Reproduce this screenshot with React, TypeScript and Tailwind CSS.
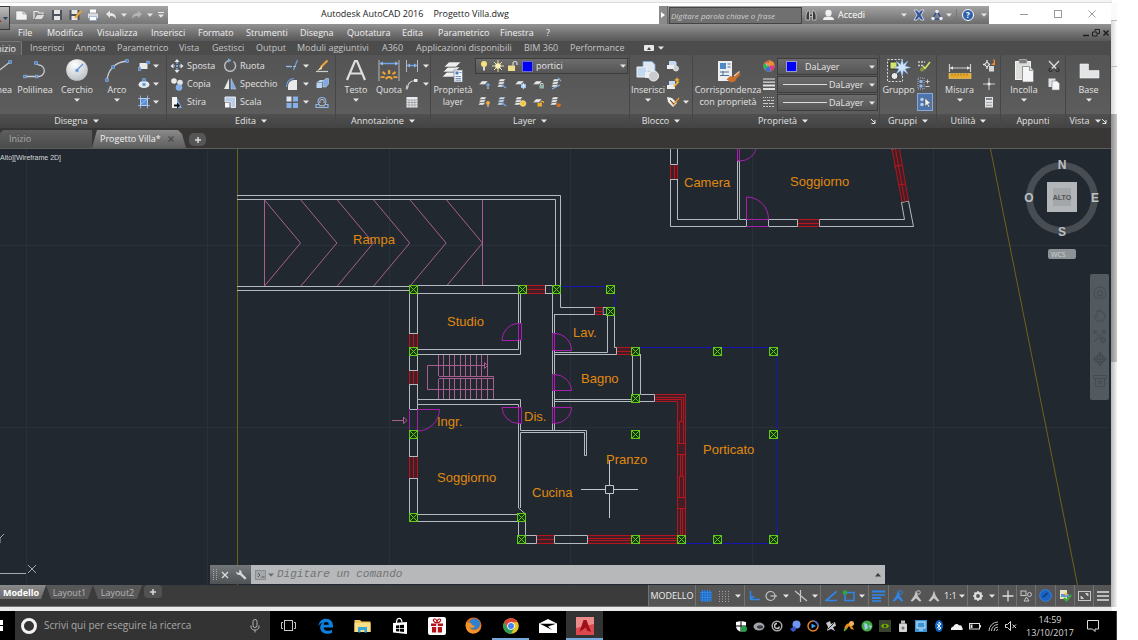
import React from "react";

type IconProps = { w?: number; h?: number; children: React.ReactNode; label?: string };

function Svg({ w = 16, h = 16, children }: IconProps) {
  return (
    <svg width={w} height={h} viewBox={`0 0 ${w} ${h}`} fill="none" className="shrink-0" aria-hidden="true">
      {children}
    </svg>
  );
}

function Caret({ color = "#e6e6e6" }: { color?: string }) {
  return (
    <Svg w={6} h={4}>
      <path d="M0 0.5h6L3 3.8z" fill={color} />
    </Svg>
  );
}

function IconButton({ label, className, children }: { label: string; className: string; children?: React.ReactNode }) {
  return (
    <button type="button" aria-label={label} className={`flex shrink-0 items-center justify-center ${className}`}>
      {children}
    </button>
  );
}

/* ---------- Ribbon glyphs ---------- */

const grip = (x: number, y: number) => (
  <rect key={`${x}-${y}`} x={x - 1.3} y={y - 1.3} width="2.6" height="2.6" fill="#4b7fc4" stroke="#8fb9ee" strokeWidth="0.7" />
);

const Sheets = ({ x = 0, y = 0, c = "#e8eaec" }: { x?: number; y?: number; c?: string }) => (
  <g transform={`translate(${x} ${y})`} stroke="#4a4a4a" strokeWidth="0.4" fill={c}>
    <path d="M2 7.6h5.5L5.4 10H0z" />
    <path d="M2.6 4.8H8L6 7.3H.6z" />
    <path d="M3.2 2H8.6L6.6 4.5H1.2z" />
  </g>
);

const Sheet = () => <path d="M4 4h6l-3 3.4H1z" fill="#e6e8ea" stroke="#555" strokeWidth="0.4" />;

const glyph = {
  line: (
    <Svg w={12} h={26}>
      <path d="M-8 18L10 4" stroke="#c9ccd0" strokeWidth="1.2" />
      {grip(10, 4)}
    </Svg>
  ),
  polyline: (
    <Svg w={26} h={26}>
      <path d="M3 18.500h13.500a5.800 5.800 0 0 0 0-11.600l-2-1.500" stroke="#c9ccd0" strokeWidth="1.3" />
      {grip(3, 18.5)}
      {grip(14.5, 18.5)}
      {grip(14, 5)}
    </Svg>
  ),
  circle: (
    <Svg w={26} h={26}>
      <defs>
        <radialGradient id="disc" cx="0.4" cy="0.25" r="0.9">
          <stop offset="0" stopColor="#ffffff" />
          <stop offset="1" stopColor="#aeb4bb" />
        </radialGradient>
      </defs>
      <circle cx="13" cy="12" r="10.800" fill="url(#disc)" />
      <path d="M13 12l6-6" stroke="#5b94dc" strokeWidth="1.200" />
      {grip(13, 12.5)}
    </Svg>
  ),
  arc: (
    <Svg w={26} h={26}>
      <path d="M3 22C4 12 11 4 23 3" stroke="#c9ccd0" strokeWidth="1.300" />
      {grip(3, 22)}
      {grip(9, 9)}
      {grip(23, 3)}
    </Svg>
  ),
  rect: (
    <Svg w={12} h={14}>
      <rect x="1.500" y="4" width="8" height="6" fill="#e8eaec" />
      {grip(1.5, 10)}
      {grip(10, 3.5)}
    </Svg>
  ),
  ellipse: (
    <Svg w={12} h={14}>
      <ellipse cx="6" cy="7.500" rx="5.500" ry="3.600" fill="#e8eaec" />
      {grip(6, 7.5)}
      {grip(6, 3)}
    </Svg>
  ),
  hatch: (
    <Svg w={12} h={14}>
      <rect x="2.500" y="3.500" width="7" height="7" fill="#5d92d6" stroke="#dfe6ef" />
      <path d="M2.500 0.500v13M9.500 0.500v13M0 3.500h12M0 10.500h12M3 9l6-5" stroke="#a7c7f1" strokeWidth="0.800" />
    </Svg>
  ),
  move: (
    <Svg>
      <path d="M8 1l2.500 3h-5zM8 15l2.500-3h-5zM1.500 8l3-2.500v5zM14.500 8l-3-2.500v5z" fill="#e8eaec" />
      <path d="M8 4v8M4 8h8" stroke="#8fb9ee" strokeWidth="1.200" strokeDasharray="2 1" />
    </Svg>
  ),
  copy: (
    <Svg>
      <circle cx="5" cy="5" r="2.800" fill="#e8eaec" />
      <circle cx="11" cy="6.500" r="2.800" fill="#dfe2e6" />
      <circle cx="10" cy="11.500" r="3.300" fill="#86b0e8" />
    </Svg>
  ),
  stretch: (
    <Svg>
      <path d="M3 3h5v11H3z" fill="#f1f3f5" />
      <path d="M8 4l5 10H8z" fill="#79a8e4" />
      <path d="M5 10.500h3V8.500l3 3-3 3v-2H5z" fill="#111" />
    </Svg>
  ),
  rotate: (
    <Svg>
      <path d="M11.500 3.500a5.500 5.500 0 1 1-5-.9" stroke="#b9bdc2" strokeWidth="1.500" />
      <path d="M6 .3l3.600 2L6 4.800z" fill="#7fa9e0" />
    </Svg>
  ),
  mirror: (
    <Svg>
      <path d="M7 2.500V13H2z" fill="#e8eaec" />
      <path d="M9 2.500V13h5z" fill="#7fa9e0" stroke="#b9d3f5" strokeWidth="0.500" />
    </Svg>
  ),
  scale: (
    <Svg>
      <path d="M3 3h10.500v10.500H9V8H3z" fill="#b8cdea" stroke="#e8eaec" />
      <rect x="3" y="9" width="4.500" height="4.500" fill="#f4f6f8" />
    </Svg>
  ),
  trim: (
    <Svg>
      <path d="M2 8.500h6" stroke="#8fb9ee" strokeWidth="1.400" />
      <path d="M13.500 2L9.500 12" stroke="#6ea3ea" strokeWidth="1.200" />
      <path d="M9 8.500h3" stroke="#b9bdc2" strokeWidth="1" />
    </Svg>
  ),
  fillet: (
    <Svg>
      <path d="M4 14V10a6 6 0 0 1 6-6h3v10z" fill="#e8eaec" />
      <path d="M2.500 11C2.500 6 5 3 10 2.500" stroke="#6ea3ea" strokeWidth="1.200" />
    </Svg>
  ),
  array: (
    <Svg>
      <rect x="2.500" y="2.500" width="5" height="5" fill="#dfe6ef" />
      <rect x="9" y="2.500" width="5" height="5" fill="#86b0e8" />
      <rect x="2.500" y="9" width="5" height="5" fill="#86b0e8" />
      <rect x="9" y="9" width="5" height="5" fill="#86b0e8" />
    </Svg>
  ),
  erase: (
    <Svg>
      <path d="M13.500 2.500L7 9" stroke="#e9a33c" strokeWidth="2.200" />
      <path d="M8 7.500L3 13l5-2z" fill="#f6d9a0" />
      <path d="M2 13.500h12" stroke="#c9ccd0" strokeWidth="1.200" />
    </Svg>
  ),
  explode: (
    <Svg>
      <path d="M3 6l3-2h4l-2 2zM2.500 6.500H8V12H2.500z" fill="#b9d3f5" />
      <path d="M9 5l3-2.500h2.500V8L12 11H9z" fill="#7fa9e0" stroke="#dbe7f7" strokeWidth="0.500" />
    </Svg>
  ),
  offset: (
    <Svg>
      <path d="M2 13.500h12v-3h-3c2-3 1-7-3-7s-5 4-3 7H2z" stroke="#8fb9ee" strokeWidth="1.100" />
      <path d="M5 11.800h6M6 9c-.8-2.500.5-3.500 2-3.500s2.800 1 2 3.500" stroke="#c9ccd0" />
    </Svg>
  ),
  text: (
    <svg width="24" height="26" viewBox="0 0 24 26" className="shrink-0" aria-hidden="true">
      <path d="M3 22L11 3h2l8 19M6 15.500h12" fill="none" stroke="#dcdee0" strokeWidth="2.200" />
    </svg>
  ),
  dimension: (
    <Svg w={24} h={26}>
      <path d="M2 2v21M22 2v21" stroke="#b3b7bb" />
      <path d="M3 5.500h18" stroke="#6ea3ea" strokeWidth="1.500" />
      <path d="M2.500 5.500l3.500-2v4zM21.500 5.500L18 3.500v4z" fill="#8fb9ee" />
      <g fill="#f0a534">
        <rect x="11" y="12" width="2.200" height="4" />
        <path d="M6 13l3 2.500-1 1.500-3-2zM18 13l-3 2.500 1 1.500 3-2zM3.500 18.500l4-.5v2h-4zM20.500 18.500l-4-.5v2h4zM8 21c1-4 7-4 8 0l-2 .5c-1-2-3-2-4 0z" />
      </g>
    </Svg>
  ),
  linear: (
    <Svg>
      <path d="M2.500 2v12M13.500 2v12" stroke="#b3b7bb" />
      <path d="M3 7.500h10" stroke="#6ea3ea" strokeWidth="1.400" />
      <path d="M3 7.500l3-2v4zM13 7.500l-3-2v4z" fill="#8fb9ee" />
    </Svg>
  ),
  leader: (
    <Svg>
      <path d="M3 13.500C4 8 5 5 11 4.500" stroke="#c9ccd0" strokeWidth="1.200" />
      <path d="M1.500 13.500l1-4.500 2.500 2z" fill="#c9ccd0" />
      <rect x="10" y="3" width="3.500" height="3" fill="#e8eaec" />
    </Svg>
  ),
  table: (
    <Svg>
      <rect x="2.500" y="3" width="11" height="10.500" fill="#e8eaec" />
      <path d="M2.500 6h11M2.500 8.500h11M2.500 11h11M5 6v7.500M8 6v7.500M10.800 6v7.500" stroke="#8d9196" strokeWidth="0.700" />
    </Svg>
  ),
  layerProps: (
    <Svg w={26} h={26}>
      <g fill="#eceef0" stroke="#555" strokeWidth="0.600">
        <path d="M7 14h12l-5 5H2z" />
        <path d="M8 9h12l-5 5H3z" />
        <path d="M9 4h12l-5 5H4z" />
      </g>
      <rect x="14" y="12" width="8.500" height="12" fill="#f4f6f8" stroke="#6b6f74" strokeWidth="0.600" />
      <rect x="15.500" y="13.500" width="3" height="3" fill="#4b7fc4" />
      <path d="M19.500 14.500h2M15.500 18.500h5.500M15.500 20.500h5.500M15.500 22.200h5.500" stroke="#5b86bd" strokeWidth="0.900" />
    </Svg>
  ),
  insertBlock: (
    <Svg w={26} h={26}>
      <path d="M8 3.500h9l3 3V14H8z" fill="#dfe6ef" stroke="#7fa9e0" strokeWidth="0.800" />
      <path d="M2 9h10v10H2z" fill="#c5d8f1" stroke="#f0f2f4" />
      <path d="M10 14h9v6h-9z" fill="#eceef0" />
      <circle cx="18.500" cy="18" r="5" fill="#c8ccd1" stroke="#f0f2f4" />
    </Svg>
  ),
  createBlock: (
    <Svg w={14} h={14}>
      <path d="M3 2h6l1.500 1.500V7H3z" fill="#c5d8f1" />
      <rect x="1" y="6" width="7" height="4" fill="#eceef0" />
      <circle cx="10" cy="9.500" r="2.600" fill="#c8ccd1" stroke="#f0f2f4" strokeWidth="0.600" />
    </Svg>
  ),
  editBlock: (
    <Svg w={14} h={14}>
      <rect x="1" y="8" width="8" height="4" fill="#eceef0" />
      <path d="M3 4h6v4H3z" fill="#c5d8f1" />
      <path d="M11 0l.9 2 2 .9-2 .9-.9 2-.9-2-2-.9 2-.9zM7 9l5-5 1.300 1.300-5 5z" fill="#f3b23c" />
    </Svg>
  ),
  attributes: (
    <Svg w={14} h={14}>
      <path d="M1 2l5 1 5 5-4 4-5-5z" fill="#eceef0" />
      <path d="M5 6l2.500 3.500L13 3" stroke="#e0962e" strokeWidth="1.600" />
      <path d="M4 5l4 4" stroke="#555" />
    </Svg>
  ),
  match: (
    <Svg w={26} h={26}>
      <rect x="3" y="3" width="14" height="20" fill="#eceef0" />
      <path d="M5 5h6v6H5z" fill="#4b89c9" />
      <path d="M12.500 6h3M12.500 9h3M5 14h9M5 17.500h9M8 13v5" stroke="#4f6f96" />
      <path d="M23.500 14.500L18 19l-3-1-3.500 3.500 5 3 4-1.500 1-2.500 4-4z" fill="#c9702c" />
      <path d="M19 18l5.500-4.500" stroke="#e7c9a9" strokeWidth="1.500" />
    </Svg>
  ),
  wheel: (
    <Svg w={12} h={12}>
      <circle cx="6" cy="6" r="5.500" fill="#e8e23c" />
      <path d="M6 6V.5A5.500 5.500 0 0 1 11.300 5z" fill="#f08c28" />
      <path d="M6 6L11.300 5A5.500 5.500 0 0 1 8 11.200z" fill="#d83a8c" />
      <path d="M6 6L8 11.200A5.500 5.500 0 0 1 1.500 9z" fill="#3d6bd8" />
      <path d="M6 6L1.500 9A5.500 5.500 0 0 1 1.500 3z" fill="#2fae58" />
      <path d="M6 6L1.500 3A5.500 5.500 0 0 1 6 .5z" fill="#d83f34" />
      <circle cx="4.500" cy="4" r="2" fill="#fff" opacity="0.350" />
    </Svg>
  ),
  weights: (
    <Svg w={12} h={12}>
      <path d="M0 1h12M0 4.200h12" stroke="#dfe1e3" strokeWidth="1.200" />
      <path d="M0 7.500h12M0 11h12" stroke="#dfe1e3" strokeWidth="2" />
    </Svg>
  ),
  lineTypes: (
    <Svg w={12} h={12}>
      <path d="M0 1.500h12" stroke="#c9ccd0" strokeDasharray="1 1" />
      <path d="M0 4.500h12" stroke="#c9ccd0" strokeDasharray="3 1" />
      <path d="M0 7.500h12" stroke="#c9ccd0" strokeDasharray="5 1" />
      <path d="M0 10.500h12" stroke="#c9ccd0" strokeDasharray="2 1" />
    </Svg>
  ),
  group: (
    <Svg w={26} h={26}>
      <rect x="1.500" y="1.500" width="15" height="22" stroke="#d5d8db" strokeDasharray="2 1.500" />
      <rect x="4" y="4" width="7" height="7" fill="#d7e36a" stroke="#222" strokeWidth="0.800" />
      <circle cx="8.500" cy="18" r="3.500" fill="#e8eaec" stroke="#222" strokeWidth="0.800" />
      <path d="M16 1l1.400 5.400L22 3l-3 5 5.500 1.500L19 11l3 5-4.600-3.400L16 18l-1.400-5.400L10 16l3-5-5-1.500L13 8l-3-5 4.600 3.400z" fill="#cfe5fb" stroke="#7fb2ee" strokeWidth="0.500" />
    </Svg>
  ),
  groupEdit: (
    <Svg w={14} h={14}>
      <path d="M1 3h7M1 6.500h6" stroke="#c9ccd0" strokeWidth="1.500" strokeDasharray="2 1" />
      <circle cx="5" cy="10.500" r="2" fill="#8c9a3a" />
      <path d="M6 7l2 2.500L13 3" stroke="#d7e36a" strokeWidth="1.500" />
    </Svg>
  ),
  groupAdd: (
    <Svg w={14} h={14}>
      <rect x="1" y="1" width="6" height="11" stroke="#9fb4d0" strokeDasharray="1 1" />
      <rect x="2.500" y="3" width="3" height="3" fill="#8fb9ee" />
      <circle cx="4" cy="9" r="1.700" fill="#8fb9ee" />
      <path d="M8.500 4.500h4M10.500 2.500v4M8.500 9.500h4" stroke="#c9ccd0" />
    </Svg>
  ),
  groupSelect: (
    <Svg w={14} h={12}>
      <circle cx="4" cy="3.500" r="1.800" fill="#b8cce8" />
      <circle cx="4" cy="8.500" r="1.800" fill="#b8cce8" />
      <path d="M7 2l6 5.500-2.700.3 1.500 3-1.300.7-1.500-3L7 10.500z" fill="#f3f3e8" stroke="#444" strokeWidth="0.500" />
    </Svg>
  ),
  measure: (
    <Svg w={26} h={26}>
      <path d="M2.500 6v8M23.500 6v8" stroke="#c9ccd0" strokeWidth="1.200" />
      <path d="M3 10h20" stroke="#c9ccd0" />
      <path d="M3 10l3-1.800v3.600zM23 10l-3-1.800v3.600z" fill="#e8eaec" />
      <rect x="2" y="15.500" width="22" height="5" fill="#e5a92e" stroke="#f5cf72" strokeWidth="0.600" />
      <path d="M5 15.500v2M8 15.500v2M11 15.500v2M14 15.500v2M17 15.500v2M20 15.500v2" stroke="#8a5d0c" strokeWidth="0.700" />
    </Svg>
  ),
  quickSelect: (
    <Svg w={14} h={14}>
      <path d="M1 5.500h7M5 1v9" stroke="#e8eaec" strokeWidth="1.300" />
      <circle cx="5" cy="5.500" r="2" stroke="#e8eaec" fill="#666" />
      <rect x="7" y="7" width="5" height="5.500" fill="#d5d8db" />
      <path d="M11 0l1 3-3 3h4V1z" fill="#ee8a2b" />
    </Svg>
  ),
  point: (
    <Svg w={14} h={14}>
      <path d="M7 1v12M1 7h12" stroke="#c9ccd0" strokeWidth="1.100" />
      <circle cx="7" cy="7" r="1.600" fill="#e8eaec" />
    </Svg>
  ),
  calc: (
    <Svg w={14} h={14}>
      <rect x="3" y="2" width="8" height="10.500" fill="#dfe1e3" />
      <path d="M4 4h6" stroke="#6b6f74" strokeWidth="1.600" />
      <path d="M4.500 7.500h5M4.500 10.300h5" stroke="#6b6f74" strokeWidth="1.200" strokeDasharray="1 1" />
    </Svg>
  ),
  paste: (
    <Svg w={26} h={26}>
      <rect x="4.500" y="3.500" width="15" height="18" fill="#dcded9" stroke="#f3f4f2" />
      <rect x="8" y="1.500" width="8" height="4" rx="1" fill="#7d7f7c" stroke="#d0d2cf" strokeWidth="0.600" />
      <path d="M11.500 8.500h7l4 4v11.500h-11z" fill="#f4f5f6" stroke="#6e7174" strokeWidth="0.700" />
      <path d="M18.500 8.500v4h4" stroke="#9a9da0" fill="#dfe1e3" />
    </Svg>
  ),
  cut: (
    <Svg w={14} h={14}>
      <path d="M2 2l8 8.500M12 2l-8 8.500" stroke="#dfe1e3" strokeWidth="1.200" />
      <circle cx="3.500" cy="11" r="1.600" stroke="#222" />
      <circle cx="10.500" cy="11" r="1.600" stroke="#222" />
    </Svg>
  ),
  copyClip: (
    <Svg w={14} h={14}>
      <rect x="1.500" y="1.500" width="7" height="8.500" fill="#dfe1e3" />
      <path d="M5 4h5l2.500 2.500V13H5z" fill="#f4f5f6" stroke="#77797c" strokeWidth="0.600" />
    </Svg>
  ),
  base: (
    <Svg w={26} h={26}>
      <path d="M4 6h8.500v6.500H23V20H4z" fill="#e2e4e6" stroke="#f5f6f7" strokeWidth="0.600" />
    </Svg>
  ),
};

/* ---------- Ribbon building blocks ---------- */

function BigTool({ icon, label, className, caret = true }: { icon: React.ReactNode; label: string; className: string; caret?: boolean }) {
  return (
    <button type="button" className={`flex shrink-0 flex-col items-center pt-[3px] leading-[12px] ${className}`}>
      {icon}
      <span className="whitespace-pre text-center">{label}</span>
      {caret && (
        <span className="pt-[2px]">
          <Caret />
        </span>
      )}
    </button>
  );
}

function SmallColumn({ items, className }: { items: { name: string; icon: React.ReactNode; caret?: boolean; on?: boolean }[]; className: string }) {
  return (
    <div className={`flex shrink-0 flex-col pt-[2px] ${className}`}>
      {items.map((it) => (
        <button
          key={it.name}
          type="button"
          aria-label={it.name}
          className={`flex h-[18px] items-center gap-[3px] ${it.on ? "border border-[#89a9d8] bg-[#4f73ab]" : ""}`}
        >
          {it.icon}
          {it.caret && <Caret />}
        </button>
      ))}
    </div>
  );
}

function LabelColumn({ items, className }: { items: { label: string; icon: React.ReactNode }[]; className: string }) {
  return (
    <div className={`flex shrink-0 flex-col pt-[2px] ${className}`}>
      {items.map((it) => (
        <button key={it.label} type="button" className="flex h-[18px] items-center gap-[2px]">
          {it.icon}
          <span>{it.label}</span>
        </button>
      ))}
    </div>
  );
}

function Panel({ title, className, children, caret = true, launcher = false }: { title: string; className: string; children: React.ReactNode; caret?: boolean; launcher?: boolean }) {
  return (
    <section aria-label={title} className={`flex shrink-0 flex-col border-r border-[#464646] ${className}`}>
      <div className="flex h-[59px] overflow-hidden bg-linear-to-b from-[#545454] to-[#5d5d5d]">{children}</div>
      <button type="button" className="flex h-[14px] items-center bg-linear-to-b from-[#505050] to-[#434343] px-[3px]">
        <span className="flex flex-1 items-center justify-center gap-[5px]">
          {title}
          {caret && <Caret />}
        </span>
        {launcher && (
          <Svg w={6} h={6}>
            <path d="M1 1l4 4M5 2v3.500H1.500" stroke="#e6e6e6" />
          </Svg>
        )}
      </button>
    </section>
  );
}

function PropertySelect({ label, swatch, line }: { label: string; swatch?: boolean; line?: boolean }) {
  return (
    <label className="flex h-[17px] items-center gap-[2px] border border-[#3d3d3d] bg-linear-to-b from-[#6c6c6c] to-[#555555] pr-[2px] pl-[4px]">
      {swatch && <span className="mr-[6px] ml-[4px] h-[11px] w-[11px] shrink-0 border border-[#9a9ad8] bg-[#0000f4]" />}
      {line && <span className="ml-px h-px w-[44px] shrink-0 bg-[#dcdcdc]" />}
      <select aria-label={label} className="min-w-0 flex-1 appearance-none bg-transparent text-[#e6e6e6] outline-none">
        <option>DaLayer</option>
      </select>
      <Caret />
    </label>
  );
}

/* ---------- Header ---------- */

function TitleBar() {
  return (
    <header className="relative flex h-[21px] items-end bg-white">
      <div className="absolute top-[3px] left-0 z-10 flex h-[24px] w-[10px] items-center border border-l-0 border-[#3a3a3a] bg-linear-to-b from-[#bdbdbd] to-[#707070]">
        <Svg w={9} h={10}>
          <path d="M0 7l1.500 2H0z" fill="#b01818" />
          <path d="M3 4h5L5.500 7z" fill="#33415e" />
        </Svg>
      </div>
      <div className="flex h-[18px] w-[168px] shrink-0 items-center bg-linear-to-b from-[#a3a3a3] to-[#767676] pl-[12px]">
        <IconButton label="Nuovo" className="w-[18px]">
          <Svg w={14} h={14}>
            <path d="M2 3h7l4 3v6H2z" fill="#f2f2f2" stroke="#777" strokeWidth="0.500" />
            <path d="M9 3v3h4" stroke="#888" strokeWidth="0.700" />
          </Svg>
        </IconButton>
        <IconButton label="Apri" className="w-[18px]">
          <Svg w={14} h={14}>
            <path d="M2 11V3.500h4l1 1.500h4v2" stroke="#e8e8e8" strokeWidth="1.200" />
            <path d="M2 11.500l3-5h8l-3 5z" fill="#ddd" stroke="#555" strokeWidth="0.500" />
          </Svg>
        </IconButton>
        <IconButton label="Salva" className="w-[18px]">
          <Svg w={14} h={14}>
            <rect x="2" y="2" width="10" height="10" fill="#4c535e" />
            <path d="M4 2h6v4H4zM4 8h6v4H4z" fill="#e6e6e6" />
          </Svg>
        </IconButton>
        <IconButton label="Salva con nome" className="w-[18px]">
          <Svg w={14} h={14}>
            <rect x="1.500" y="2" width="10" height="10" fill="#4c535e" />
            <path d="M3.500 2h6v4h-6zM3.500 8h6v4h-6z" fill="#e6e6e6" />
            <path d="M13 3L7 10" stroke="#efa22e" strokeWidth="2" />
          </Svg>
        </IconButton>
        <IconButton label="Stampa" className="w-[18px]">
          <Svg w={14} h={14}>
            <path d="M4 1.500h6V6H4z" fill="#fff" />
            <rect x="1.500" y="5" width="11" height="5.500" rx="1" fill="#d9dde2" stroke="#666" strokeWidth="0.500" />
            <path d="M3.500 8.500h7v4h-7z" fill="#fff" stroke="#6b8fc0" strokeWidth="0.500" />
          </Svg>
        </IconButton>
        <IconButton label="Annulla" className="w-[18px]">
          <Svg w={12} h={12}>
            <path d="M1 5l4-3.500V4c4 0 6 2 6 6-1.500-2.500-3-3-6-3v2z" fill="#e6e6e6" />
          </Svg>
        </IconButton>
        <span className="flex w-[8px] justify-center"><Caret /></span>
        <IconButton label="Ripeti" className="w-[18px]">
          <Svg w={12} h={12}>
            <path d="M11 5L7 1.500V4C3 4 1 6 1 10c1.500-2.500 3-3 6-3v2z" fill="#b4b4b4" />
          </Svg>
        </IconButton>
        <span className="flex w-[8px] justify-center"><Caret /></span>
        <span className="flex flex-1 flex-col items-center gap-px"><span className="h-px w-[6px] bg-[#eee]" /><Caret /></span>
      </div>
      <h1 className="flex flex-1 items-center gap-[10px] self-center pl-[153px] text-[9px] whitespace-nowrap text-[#1c1c1c]">
        <span>Autodesk AutoCAD 2016</span>
        <span>Progetto Villa.dwg</span>
      </h1>
      <div className="flex h-[18px] w-[330px] shrink-0 items-center bg-linear-to-b from-[#a3a3a3] to-[#6c6c6c]">
        <span className="flex h-full w-[9px] items-center justify-center border-r border-[#666] bg-[#8a8a8a]">
          <Svg w={4} h={6}><path d="M0 0l4 3-4 3z" fill="#fff" /></Svg>
        </span>
        <input
          type="text"
          aria-label="Cerca"
          placeholder="Digitare parola chiave o frase"
          className="ml-px h-[17px] w-[133px] border border-[#444] bg-[#707070] px-px text-[8px] italic text-white outline-none placeholder:text-[#cfcfcf]"
        />
        <IconButton label="Trova" className="w-[17px]">
          <Svg w={12} h={12}>
            <path d="M1 11V6l1.500-4h2V11zM7.500 11V2h2L11 6v5zM4.500 5h3v2.500h-3z" fill="#3c3c3c" stroke="#d6d6d6" strokeWidth="0.700" />
          </Svg>
        </IconButton>
        <button type="button" className="flex w-[48px] items-center gap-[3px] pl-[3px] text-[9px] text-white">
          <Svg w={13} h={12}>
            <circle cx="6.500" cy="4" r="3.200" fill="#f0f0f0" />
            <path d="M1 11c0-3 3-3.500 5.500-3.500S12 8 12 11z" fill="#f0f0f0" />
          </Svg>
          Accedi
        </button>
        <span className="flex flex-1 justify-end pr-[2px]"><Caret /></span>
        <IconButton label="Exchange" className="w-[20px]">
          <Svg w={12} h={12}>
            <path d="M1 1h3l2 2.500L8 1h3L8 6l3 5H8L6 8.500 4 11H1l3-5z" fill="#33549b" stroke="#e6ebf5" strokeWidth="0.800" />
          </Svg>
        </IconButton>
        <IconButton label="Connessioni" className="w-[16px]">
          <Svg w={12} h={12}>
            <path d="M6 2L1.500 10h9z" stroke="#2f4f94" strokeWidth="1.500" />
            <circle cx="6" cy="2.500" r="1.800" fill="#e6ebf5" /><circle cx="2" cy="9.500" r="1.800" fill="#e6ebf5" /><circle cx="10" cy="9.500" r="1.800" fill="#e6ebf5" />
          </Svg>
        </IconButton>
        <span className="flex w-[8px] justify-center"><Caret /></span>
        <span className="ml-[3px] h-[12px] w-px bg-[#777]" />
        <IconButton label="Guida" className="w-[22px]">
          <span className="flex h-[12px] w-[12px] items-center justify-center rounded-full border border-white bg-[#2f5fa8] text-[8px] leading-none font-bold text-white">?</span>
        </IconButton>
        <span className="flex w-[10px] justify-center"><Caret /></span>
      </div>
      <div className="flex w-[122px] shrink-0 self-center pl-[18px]">
        <IconButton label="Riduci a icona" className="w-[34px]">
          <Svg w={8} h={8}><path d="M0 4.500h8" stroke="#9a9a9a" /></Svg>
        </IconButton>
        <IconButton label="Ingrandisci" className="w-[34px]">
          <Svg w={8} h={8}><rect x="0.500" y="0.500" width="7" height="7" stroke="#9a9a9a" /></Svg>
        </IconButton>
        <IconButton label="Chiudi" className="w-[34px]">
          <Svg w={8} h={8}><path d="M0.500 0.500l7 7M7.500 0.500l-7 7" stroke="#9a9a9a" /></Svg>
        </IconButton>
      </div>
    </header>
  );
}

const menus = [
  ["File", "w-[29px]"],
  ["Modifica", "w-[50px]"],
  ["Visualizza", "w-[54px]"],
  ["Inserisci", "w-[47px]"],
  ["Formato", "w-[48px]"],
  ["Strumenti", "w-[54px]"],
  ["Disegna", "w-[47px]"],
  ["Quotatura", "w-[55px]"],
  ["Edita", "w-[36px]"],
  ["Parametrico", "w-[62px]"],
  ["Finestra", "w-[46px]"],
  ["?", "w-[20px]"],
];

const ribbonTabs = [
  ["Inserisci", "w-[45px]"],
  ["Annota", "w-[42px]"],
  ["Parametrico", "w-[62px]"],
  ["Vista", "w-[33px]"],
  ["Gestisci", "w-[44px]"],
  ["Output", "w-[41px]"],
  ["Moduli aggiuntivi", "w-[85px]"],
  ["A360", "w-[34px]"],
  ["Applicazioni disponibili", "w-[108px]"],
  ["BIM 360", "w-[46px]"],
  ["Performance", "w-[74px]"],
];

function MenuBar() {
  return (
    <nav aria-label="Menu" className="flex h-[17px] items-center bg-linear-to-b from-[#949494] via-[#747474] to-[#585858] pl-[18px] text-[#f0f0f0]">
      {menus.map(([name, width]) => (
        <button key={name} type="button" className={`shrink-0 text-left whitespace-nowrap ${width}`}>
          {name}
        </button>
      ))}
      <div className="ml-auto flex gap-[2px] pr-px">
        <IconButton label="Riduci disegno" className="w-[8px]">
          <Svg w={8} h={8}><path d="M1 6.500h6" stroke="#1e1e1e" strokeWidth="1.500" /></Svg>
        </IconButton>
        <IconButton label="Ripristina disegno" className="w-[8px]">
          <Svg w={8} h={8}><path d="M3 2.500v-2h4.500v4h-2M0.500 3h4.500v4H0.500z" stroke="#1e1e1e" /></Svg>
        </IconButton>
        <IconButton label="Chiudi disegno" className="w-[8px]">
          <Svg w={8} h={8}><path d="M1.500 1.500l5 5M6.500 1.500l-5 5" stroke="#1e1e1e" strokeWidth="1.600" /></Svg>
        </IconButton>
      </div>
    </nav>
  );
}

function RibbonTabs() {
  return (
    <nav aria-label="Schede" className="flex h-[14px] bg-[#4c4c4c] text-[#c6c6c6]">
      <button type="button" className="mr-[8px] flex w-[22px] shrink-0 justify-end overflow-hidden rounded-tr-[2px] border-t border-r border-[#777] bg-[#5a5a5a] pr-[5px] leading-[13px] text-[#f0f0f0]">
        Inizio
      </button>
      {ribbonTabs.map(([name, width]) => (
        <button key={name} type="button" className={`shrink-0 text-left leading-[14px] whitespace-nowrap ${width}`}>
          {name}
        </button>
      ))}
      <button type="button" aria-label="Riduci barra multifunzione" className="flex items-center gap-[4px]">
        <span className="flex h-[6px] w-[10px] items-center justify-center rounded-[1px] bg-[#e8e8e8]">
          <Svg w={4} h={3}><path d="M0 3l2-3 2 3z" fill="#444" /></Svg>
        </span>
        <Caret />
      </button>
    </nav>
  );
}

const layerRowOne = [
  { name: "Disattiva", art: <><Sheet /><circle cx="10" cy="8" r="1.800" fill="#79a8e4" /><path d="M10 10v2" stroke="#dfe1e3" /></> },
  { name: "Isola", art: <><Sheets x={1} y={0} /><path d="M6 8l4 3" stroke="#6ea3ea" strokeWidth="1.500" /></> },
  { name: "Congela", art: <><Sheet /><circle cx="9.500" cy="9" r="2.500" fill="#8fc2f5" /><path d="M9.500 6v6M7 7.500l5 3M12 7.500l-5 3" stroke="#e4f1ff" strokeWidth="0.600" /></> },
  { name: "Blocca", art: <><Sheet /><rect x="7.500" y="8" width="4.500" height="3.500" fill="#8db7a4" /><path d="M8.500 8V6.500h2.500V8" stroke="#c9ccd0" /></> },
  { name: "Rendi corrente", art: <><Sheets x={1} y={0} /><path d="M8 1l3 3M2 12l8-4" stroke="#7fb2e0" strokeWidth="1.200" /></> },
];

const layerRowTwo = [
  { name: "Attiva tutto", art: <><Sheets /><circle cx="10" cy="8" r="1.900" fill="#f0b23c" /><path d="M10 10v2" stroke="#dfe1e3" /></> },
  { name: "Annulla isolamento", art: <><Sheets x={1} y={0} c="#c5d8f1" /><path d="M6 8l4 3" stroke="#6ea3ea" strokeWidth="1.500" /></> },
  { name: "Scongela tutto", art: <><Sheets /><circle cx="9" cy="8.500" r="2.800" fill="#f3c93c" stroke="#fae59a" strokeWidth="0.800" /></> },
  { name: "Sblocca", art: <><Sheet /><rect x="5.500" y="8" width="4.500" height="3.500" fill="#eda92c" /><path d="M9 8V6.500h2.500V8" stroke="#eda92c" /></> },
  { name: "Corrispondenza layer", art: <><Sheets /><path d="M6 8l5 1-1 3H7z" fill="#c9702c" /></> },
];

function LayerIcons({ items }: { items: { name: string; art: React.ReactNode }[] }) {
  return (
    <div className="flex h-[18px] items-center">
      {items.map((it) => (
        <IconButton key={it.name} label={it.name} className="w-[18px]">
          <Svg w={13} h={13}>{it.art}</Svg>
        </IconButton>
      ))}
    </div>
  );
}

function Ribbon() {
  return (
    <div className="flex h-[73px] bg-[#5a5a5a] text-[#e2e2e2]">
      <section aria-label="Disegna" className="flex w-[167px] shrink-0 flex-col border-r border-[#464646]">
        <div className="flex h-[59px] overflow-hidden bg-linear-to-b from-[#545454] to-[#5d5d5d]">
          <button type="button" className="flex w-[12px] shrink-0 flex-col items-end pt-[3px] leading-[12px]">
            {glyph.line}
            <span>Linea</span>
          </button>
          <BigTool icon={glyph.polyline} label="Polilinea" className="w-[46px]" caret={false} />
          <BigTool icon={glyph.circle} label="Cerchio" className="w-[38px]" />
          <BigTool icon={glyph.arc} label="Arco" className="w-[42px]" />
          <SmallColumn
            className="w-[26px]"
            items={[
              { name: "Rettangolo", icon: glyph.rect, caret: true },
              { name: "Ellisse", icon: glyph.ellipse, caret: true },
              { name: "Tratteggio", icon: glyph.hatch, caret: true },
            ]}
          />
        </div>
        <button type="button" className="flex h-[14px] items-center justify-center gap-[5px] bg-linear-to-b from-[#505050] to-[#434343] pr-[13px]">
          Disegna
          <Caret />
        </button>
      </section>

      <Panel title="Edita" className="w-[169px]">
        <LabelColumn
          className="w-[55px] pl-[2px]"
          items={[
            { label: "Sposta", icon: glyph.move },
            { label: "Copia", icon: glyph.copy },
            { label: "Stira", icon: glyph.stretch },
          ]}
        />
        <LabelColumn
          className="w-[62px]"
          items={[
            { label: "Ruota", icon: glyph.rotate },
            { label: "Specchio", icon: glyph.mirror },
            { label: "Scala", icon: glyph.scale },
          ]}
        />
        <SmallColumn
          className="w-[30px]"
          items={[
            { name: "Taglia", icon: glyph.trim, caret: true },
            { name: "Raccorda", icon: glyph.fillet, caret: true },
            { name: "Serie", icon: glyph.array, caret: true },
          ]}
        />
        <SmallColumn
          className="w-[16px]"
          items={[
            { name: "Cancella", icon: glyph.erase },
            { name: "Esplodi", icon: glyph.explode },
            { name: "Offset", icon: glyph.offset },
          ]}
        />
      </Panel>

      <Panel title="Annotazione" className="w-[95px]">
        <BigTool icon={glyph.text} label="Testo" className="w-[40px]" />
        <BigTool icon={glyph.dimension} label="Quota" className="w-[26px]" caret={false} />
        <SmallColumn
          className="w-[28px] pl-[2px]"
          items={[
            { name: "Lineare", icon: glyph.linear, caret: true },
            { name: "Direttrice", icon: glyph.leader, caret: true },
            { name: "Tabella", icon: glyph.table },
          ]}
        />
      </Panel>

      <Panel title="Layer" className="w-[199px]">
        <BigTool icon={glyph.layerProps} label={"Proprietà\nlayer"} className="w-[44px]" caret={false} />
        <div className="flex flex-1 flex-col pt-[3px] pr-px">
          <label className="flex h-[16px] items-center gap-[3px] border border-[#3d3d3d] bg-linear-to-b from-[#6c6c6c] to-[#555555] pr-px pl-[3px]">
            <Svg w={10} h={12}>
              <circle cx="5" cy="4" r="3" fill="#f6e27c" />
              <path d="M4 7h2v3.500H4z" fill="#d9dbdd" />
            </Svg>
            <Svg w={12} h={12}>
              <path d="M6 0v12M0 6h12M2 2l8 8M10 2l-8 8" stroke="#f3e9a4" strokeWidth="0.900" />
              <circle cx="6" cy="6" r="2.800" fill="#f8f1b8" />
            </Svg>
            <Svg w={12} h={12}>
              <rect x="1" y="5.500" width="7" height="5.500" fill="#f1dd8a" />
              <path d="M6 5.500V3.500a2 2 0 0 1 4 0V5" stroke="#d9dbdd" strokeWidth="1.200" />
            </Svg>
            <span className="h-[11px] w-[11px] shrink-0 border border-[#6c6cd0] bg-[#0000f4]" />
            <select aria-label="Layer corrente" className="min-w-0 flex-1 appearance-none bg-transparent text-[#e6e6e6] outline-none">
              <option>portici</option>
            </select>
            <Caret />
          </label>
          <LayerIcons items={layerRowOne} />
          <LayerIcons items={layerRowTwo} />
        </div>
      </Panel>

      <Panel title="Blocco" className="w-[63px]">
        <BigTool icon={glyph.insertBlock} label="Inserisci" className="w-[36px]" />
        <SmallColumn
          className="w-[26px]"
          items={[
            { name: "Crea blocco", icon: glyph.createBlock },
            { name: "Modifica blocco", icon: glyph.editBlock },
            { name: "Attributi", icon: glyph.attributes, caret: true },
          ]}
        />
      </Panel>

      <Panel title="Proprietà" className="w-[187px]" launcher>
        <BigTool icon={glyph.match} label={"Corrispondenza\ncon proprietà"} className="w-[70px]" caret={false} />
        <SmallColumn
          className="w-[14px]"
          items={[
            { name: "Colore", icon: glyph.wheel },
            { name: "Spessore di linea", icon: glyph.weights },
            { name: "Tipo di linea", icon: glyph.lineTypes },
          ]}
        />
        <div className="flex flex-1 flex-col gap-px pt-[3px] pr-px">
          <PropertySelect label="Colore oggetto" swatch />
          <PropertySelect label="Spessore di linea" line />
          <PropertySelect label="Tipo di linea" line />
        </div>
      </Panel>

      <Panel title="Gruppi" className="w-[57px]">
        <BigTool icon={glyph.group} label="Gruppo" className="w-[37px]" caret={false} />
        <SmallColumn
          className="w-[16px]"
          items={[
            { name: "Modifica gruppo", icon: glyph.groupEdit },
            { name: "Aggiungi al gruppo", icon: glyph.groupAdd },
            { name: "Selezione gruppi", icon: glyph.groupSelect, on: true },
          ]}
        />
      </Panel>

      <Panel title="Utilità" className="w-[64px]">
        <BigTool icon={glyph.measure} label="Misura" className="w-[45px]" />
        <SmallColumn
          className="w-[16px]"
          items={[
            { name: "Selezione rapida", icon: glyph.quickSelect },
            { name: "Punto", icon: glyph.point },
            { name: "Calcolatrice", icon: glyph.calc },
          ]}
        />
      </Panel>

      <Panel title="Appunti" className="w-[65px]" caret={false}>
        <BigTool icon={glyph.paste} label="Incolla" className="w-[46px]" />
        <SmallColumn
          className="w-[16px]"
          items={[
            { name: "Taglia negli Appunti", icon: glyph.cut },
            { name: "Copia negli Appunti", icon: glyph.copyClip },
          ]}
        />
      </Panel>

      <Panel title="Vista" className="w-[45px]" launcher>
        <BigTool icon={glyph.base} label="Base" className="w-[45px]" />
      </Panel>
    </div>
  );
}

function FileTabs() {
  return (
    <div className="flex h-[21px] items-end border-b border-[#5c5c5c] bg-[#383736]">
      <button type="button" className="h-[18px] w-[92px] shrink-0 rounded-tl-[5px] bg-linear-to-b from-[#5e5e5e] to-[#4c4c4c] pl-[9px] text-left text-[#aaaaaa]">
        Inizio
      </button>
      <div className="flex h-[18px] w-[94px] shrink-0 items-center justify-between bg-linear-to-b from-[#8a8a8a] to-[#5f5f5f] pr-[11px] pl-[8px] text-[#f2f2f2] [clip-path:polygon(5px_0,calc(100%-8px)_0,calc(100%-4px)_4px,100%_100%,0_100%)]">
        <button type="button" className="whitespace-nowrap">Progetto Villa*</button>
        <IconButton label="Chiudi Progetto Villa" className="w-[8px]">
          <Svg w={6} h={6}><path d="M0.500 0.500l5 5M5.500 0.500l-5 5" stroke="#4a4a4a" strokeWidth="1.300" /></Svg>
        </IconButton>
      </div>
      <IconButton label="Nuova scheda" className="mb-[2px] ml-[3px] h-[13px] w-[17px] rounded-[5px] bg-[#565656]">
        <Svg w={8} h={8}><path d="M1 4h6M4 1v6" stroke="#dedede" strokeWidth="1.500" /></Svg>
      </IconButton>
    </div>
  );
}

/* ---------- Drawing ---------- */

const columns = [
  [413, 289], [522, 289], [556, 289], [610, 289], [413, 351], [610, 311], [635, 351], [635, 398],
  [413, 434], [413, 517], [521, 517], [521, 539], [635, 434], [635, 539], [681, 539], [717, 539],
  [773, 539], [717, 351], [773, 351], [773, 434],
];

const rooms: [string, number, number][] = [
  ["Rampa", 353, 244], ["Studio", 447, 326], ["Lav.", 573, 337], ["Bagno", 581, 383], ["Dis.", 524, 421],
  ["Ingr.", 437, 426], ["Soggiorno", 437, 482], ["Cucina", 532, 497], ["Pranzo", 606, 464],
  ["Porticato", 703, 454], ["Camera", 684, 187], ["Soggiorno", 790, 186],
];

const wallPath = [
  "M237 195.500H560.500V307.500H594.500M237 199.500H555.500V285.500M237 286.500H409M237 290.500H409",
  "M409 285.500H527M545 285.500H556M417 293.500H518.500M545 293.500H552.500M545.500 285.500V293.500M526.500 285.500V293.500",
  "M409.500 285V333M417.500 293V333M409 333.500H418M409 347.500H418M409.500 347V370M417.500 347V370M409 370.500H418M409 384.500H418M409.500 384V409M417.500 384V409M409 409.500H418",
  "M417 349.500H518.500M417 354.500H520.500M518.500 293V323M520.500 293V323M518.500 340V349.500M520.500 340V354.500",
  "M417 399.500H520.500V407M417 404.500H518.500V407",
  "M409.500 438V456M417.500 438V456M409 456.500H418M409 478.500H418M409.500 478V514M417.500 478V514",
  "M417 514.500H518M409 521.500H518M518.500 423V508L525.500 514M520.500 423V430.500M520.500 432.500V508",
  "M520.500 430.500H586.500V455.500H584.500V432.500H520.500M518.500 521V536M525.500 513V536",
  "M525 535.500H536.500V543.500H525M554.500 535.500H587.500V543.500H554.500z",
  "M552.500 293V333M554.500 314V333M552.500 350V374M554.500 350V374M552.500 391V407M554.500 391V407M552.500 423V430M554.500 423V430",
  "M554 314.500H594.500V307.500M603 307.500V314.500M603 307.500H607M603 314.500H607.500V352.500H554M554 354.500H616.500V347.500H614.500V314",
  "M632.500 354V394M640.500 354V394.500M554 399.500H632M554 401.500H640M640.500 394.500H654.500V401.500H640M631.500 347.500V354.500",
  "M670.500 149V164.500H677.500V149M670.500 179.500H677.500M670.500 179V226.500H746.500V219.500H739.500V161M677.500 179V219.500H737.500V161H739.500",
  "M768.500 219.500H797.500V226.500H768.500zM819.500 219.500V226.500H913.500L908.500 201L901.500 202.500L904.500 219.500H819.500M891 149h3",
];

const glassPath = [
  "M527 285H545V294H527zM409 334H418V347H409zM409 371H418V384H409zM409 457H418V478H409z",
  "M595 307H603V315H595zM617 347H631V355H617zM537 535H554V544H537zM588 535H678V544H588z",
  "M655 394H686V536H677V402H655zM670 165H678V179H670zM798 219H819V227H798zM892 149H899.500L908.500 201L902 202z",
];

const windowPath = [
  "M527 285.500H545M527 289.500H545M527 293.500H545",
  "M409.500 334V347M413.500 334V347M417.500 334V347M409.500 371V384M413.500 371V384M417.500 371V384M409.500 457V478M413.500 457V478M417.500 457V478",
  "M595 307.500H603M595 311.500H603M595 314.500H603M617 347.500H631M617 351.500H631M617 354.500H631",
  "M537 535.500H554M537 539.500H554M537 543.500H554M588 535.500H678M588 538.500H678M588 540.500H678M588 543.500H678",
  "M655 394.500H685.500V536M655 397.500H683.500V421M655 399.500H681.500V421M655 401.500H677.500V536",
  "M679.500 421.500H683.500V443.500H679.500zM677.500 443.500H685.500M677.500 454.500H685.500M680.500 454V476M682.500 454V476",
  "M679.500 476.500H683.500V497.500H679.500zM677.500 497.500H685.500M677.500 508.500H685.500M680.500 508V536M682.500 508V536",
  "M670.500 165V179M674.500 165V179M677.500 165V179M798 219.500H819M798 223.500H819M798 226.500H819",
];

const doorPath = [
  "M518.500 323.500h3v16.500h-3zM518 340.500H502A17 17 0 0 1 518 323.500",
  "M518.500 407.500h3v16h-3zM518 407.500H502A17 17 0 0 0 518 423.500",
  "M552.500 333.500h2v17h-2zM554.500 350.500H571.500A17 17 0 0 0 554.500 333.500",
  "M552.500 374.500h2v16h-2zM554.500 390.500H571.500A17 17 0 0 0 554.500 374.500",
  "M552.500 407.500h2v16h-2zM554.500 407.500H571.500A17 17 0 0 1 554.500 423.500",
  "M409.500 409V431M417.500 431V409.500H439.500A22 22 0 0 1 417.500 431",
  "M737.500 149V161H739.500V149M739.500 161A17 15 0 0 0 756 149",
  "M746.500 219.500V197A22 22 0 0 1 768.500 219.500zM746.500 226.500H768.500",
];

const chevrons = [0, 1, 2, 3, 4, 5].map((k) => 264.5 + k * 36.4);
const steps = [0, 1, 2, 3, 4, 5, 6, 7, 8, 9].map((k) => Math.round(438 + k * 5.4) + 0.5);

function FloorPlan() {
  return (
    <svg className="absolute inset-0 h-full w-full" role="img" aria-label="Progetto Villa">
      <g transform="translate(0 -149)" fill="none" strokeWidth="1">
        <g stroke="#29323a">
          {[26, 207, 389, 570, 752, 933].map((x) => (
            <path key={x} d={`M${x}.500 149V600`} />
          ))}
          <path d="M0 245.500H1108M0 427.500H1108" />
        </g>
        <path d="M237.500 149V600M990.500 149L1080.500 600" stroke="#70611a" />
        <path d="M560 286.500H614.500V307M640 347.500H777.500V543.500H685" stroke="#1717b4" />
        <g stroke="#a85f90">
          <path d="M264.500 200V286M482.500 200V286" />
          {chevrons.map((x) => (
            <path key={x} d={`M${x} 200L${x + 36} 243L${x} 286`} />
          ))}
          {steps.map((x) => (
            <path key={x} d={`M${x} 355V376M${x} 379V399`} />
          ))}
          <path d="M439 376.500H493.500V399M439 378.500H493M484 365.500H427.500V389.500H493M484.500 362.500V368.500L487.500 365.500z" />
          <path d="M392 420.500H403M403.500 417L407 420.500L403.500 423.500z" />
        </g>
        <path d={wallPath.join("")} stroke="#b4babf" />
        <path d={glassPath.join("")} fill="#5c1820" fillOpacity="0.6" />
        <path d={windowPath.join("")} stroke="#b3161e" />
        <path d="M892 149L902 202M895.500 149L905 202M899.500 149L908.500 201M894 166.500L903 165M898 185L906 184" stroke="#b3161e" />
        <path d={doorPath.join("")} stroke="#a81fb0" />
        {columns.map(([x, y]) => (
          <g key={`${x}-${y}`} stroke="#62c81c">
            <rect x={x - 3.5} y={y - 3.5} width="8" height="8" fill="#18360f" />
            <path d={`M${x - 3} ${y - 3}l7 7M${x + 4} ${y - 3}l-7 7`} />
          </g>
        ))}
        <g className="[font-family:'Liberation_Sans',sans-serif] text-[13px]" fill="#e0890f">
          {rooms.map(([name, x, y]) => (
            <text key={`${name}-${x}`} x={x} y={y}>{name}</text>
          ))}
        </g>
        <path d="M581 489.500H605M614 489.500H638M609.500 461V485M609.500 494V518M605.500 485.500H613.500V493.500H605.500z" stroke="#c3c8cc" />
        <path d="M0 573.500H26M28 565L36 573M36 565L28 573M-4 534L0 538L4 534M0 538V543" stroke="#a3a9ae" />
      </g>
    </svg>
  );
}

function ViewCube() {
  return (
    <div className="absolute top-[9px] right-[10px] flex flex-col items-center">
      <svg width="78" height="84" viewBox="0 0 78 84" className="[font-family:'Liberation_Sans',sans-serif]" aria-label="ViewCube">
        <circle cx="39" cy="40" r="32.500" fill="none" stroke="#474d52" strokeWidth="7" />
        <rect x="24" y="24" width="30" height="30" fill="#b3b6b8" />
        <rect x="30" y="30" width="18" height="18" fill="#a4a7a9" />
        <g className="text-[12px] font-bold" fill="#bcc0c3" textAnchor="middle">
          <text x="39" y="11">N</text>
          <text x="39" y="78">S</text>
          <text x="6" y="44">O</text>
          <text x="72" y="44">E</text>
        </g>
        <text x="39" y="42" textAnchor="middle" className="text-[7px] font-bold" fill="#505356">ALTO</text>
      </svg>
      <button type="button" className="mt-[7px] flex h-[10px] w-[28px] items-center rounded-[2px] bg-[#8d9297] px-[3px] text-[7px] leading-none text-[#cfd2d4]">
        WCS
      </button>
    </div>
  );
}

function NavBar() {
  return (
    <div className="absolute top-[125px] right-[2px] flex h-[126px] w-[19px] flex-col items-center justify-around rounded-[2px] bg-[#535a5f] py-[8px]">
      <IconButton label="Ruota di navigazione" className="h-[16px] w-[16px]">
        <Svg><circle cx="8" cy="8" r="6" stroke="#454c51" /><circle cx="8" cy="8" r="2.500" stroke="#454c51" /><path d="M5 11h6" stroke="#454c51" /></Svg>
      </IconButton>
      <IconButton label="Panoramica" className="h-[16px] w-[16px]">
        <Svg><path d="M5 14C3 11 2 9 3 8l2 2V4c1-1 2 0 2 1V3c1-1 2 0 2 1v1c1-1 2 0 2 1v1c1-1 2 0 2 1 0 3-1 4-2 6z" stroke="#454c51" /></Svg>
      </IconButton>
      <IconButton label="Zoom" className="h-[16px] w-[16px]">
        <Svg><path d="M2 2l11 11M13 2L2 13M2 5V2h3M10 2h3v3" stroke="#42494e" /><circle cx="11" cy="11" r="2.500" stroke="#42494e" /></Svg>
      </IconButton>
      <IconButton label="Orbita" className="h-[16px] w-[16px]">
        <Svg><path d="M8 1v14M1 8h14" stroke="#42494e" /><ellipse cx="8" cy="8" rx="6" ry="3" stroke="#42494e" /><ellipse cx="8" cy="8" rx="3" ry="6" stroke="#42494e" /></Svg>
      </IconButton>
      <IconButton label="ShowMotion" className="h-[16px] w-[16px]">
        <Svg><path d="M1.500 2.500h13v3h-13zM3.500 5.500h9v8h-9zM7 7.500v4l3-2z" stroke="#454c51" /></Svg>
      </IconButton>
    </div>
  );
}

function CommandLine() {
  return (
    <div className="absolute right-[226px] bottom-[1px] left-[210px] flex h-[19px] bg-[#b6b8b9]">
      <div className="flex w-[41px] shrink-0 items-center bg-linear-to-b from-[#74777a] to-[#505356] pl-[2px]">
        <Svg w={6} h={16}><path d="M1.500 2v12M4.500 2v12" stroke="#a5a8aa" strokeDasharray="1 1" /></Svg>
        <IconButton label="Chiudi riga di comando" className="w-[14px]">
          <Svg w={8} h={8}><path d="M1 1l6 6M7 1l-6 6" stroke="#dcdcdc" strokeWidth="1.300" /></Svg>
        </IconButton>
        <IconButton label="Personalizza" className="w-[18px]">
          <Svg w={12} h={12}>
            <path d="M1 2.500l2 1.500 1.500-1L4 1c2 0 3 1.500 2.700 3.200L11.500 9 10 10.800 5 6C3 6.500 1 5 1 2.500z" fill="#d5d7d8" />
          </Svg>
        </IconButton>
      </div>
      <label className="flex flex-1 items-center gap-[2px] px-[4px]">
        <span className="flex h-[10px] w-[11px] items-center justify-center border border-[#8b8e91] bg-[#a5a8ab]">
          <Svg w={8} h={6}><path d="M1 1l2 2-2 2M4.500 5h3" stroke="#55595c" /></Svg>
        </span>
        <Caret color="#6a6d70" />
        <input
          type="text"
          aria-label="Riga di comando"
          placeholder="Digitare un comando"
          className="ml-px min-w-0 flex-1 bg-transparent text-[11px] italic outline-none [font-family:'Liberation_Mono',monospace] placeholder:text-[#717477]"
        />
        <Svg w={6} h={4}><path d="M0 3.500h6L3 0z" fill="#3a3c3e" /></Svg>
      </label>
    </div>
  );
}

/* ---------- Status bar ---------- */

const blue = "#2f86e8";
const pale = "#c4c6c8";

function StatusGroup({ children, className }: { children: React.ReactNode; className: string }) {
  return <div className={`flex h-full shrink-0 items-center border-r border-[#727272] ${className}`}>{children}</div>;
}

function StatusBar() {
  const person = (c: string, mark: boolean) => (
    <Svg w={14} h={14}>
      <path d="M7 1.500l1.700 5.200L12.500 12l-2 .5L7 9.300l-3.500 3.200-2-.5 3.800-5.300z" fill={c} />
      {mark && <circle cx="9.500" cy="3.500" r="1.800" fill="none" stroke={c} />}
    </Svg>
  );
  return (
    <footer className="flex h-[22px] justify-between border-b border-[#777] bg-[#3b3b3b]">
      <nav aria-label="Layout" className="flex items-start">
        <button type="button" className="h-[14px] w-[46px] bg-linear-to-b from-[#8a8a8a] to-[#6a6a6a] pl-[3px] text-left leading-[13px] font-bold text-white [clip-path:polygon(0_0,100%_0,calc(100%-5px)_100%,0_100%)]">
          Modello
        </button>
        <button type="button" className="h-[14px] w-[47px] bg-[#575757] leading-[13px] text-[#b5b5b5] [clip-path:polygon(0_0,100%_0,calc(100%-5px)_100%,5px_100%)]">
          Layout1
        </button>
        <button type="button" className="h-[14px] w-[49px] bg-[#575757] leading-[13px] text-[#b5b5b5] [clip-path:polygon(0_0,100%_0,calc(100%-5px)_100%,5px_100%)]">
          Layout2
        </button>
        <IconButton label="Nuovo layout" className="ml-[2px] h-[13px] w-[18px] rounded-[4px] bg-[#515151]">
          <Svg w={8} h={8}><path d="M1 4h6M4 1v6" stroke="#d6d6d6" strokeWidth="1.500" /></Svg>
        </IconButton>
      </nav>
      <div className="flex h-[21px] border-l border-[#727272] bg-[#555555] text-[#eeeeee]">
        <StatusGroup className="w-[47px] justify-center">
          <button type="button">MODELLO</button>
        </StatusGroup>
        <StatusGroup className="w-[49px]">
          <IconButton label="Griglia" className="w-[19px]">
            <Svg w={12} h={12}><rect x="1" y="1" width="10" height="10" fill="#2163b0" /><path d="M2.500 0v12M5 0v12M7.500 0v12M10 0v12M0 2.500h12M0 5h12M0 7.500h12M0 10h12" stroke={blue} /></Svg>
          </IconButton>
          <IconButton label="Snap" className="w-[17px]">
            <Svg w={12} h={12}><path d="M1.500 1v11M4.500 1v11M7.500 1v11M10.500 1v11" stroke="#a5a7a9" strokeDasharray="1 1.500" /></Svg>
          </IconButton>
          <span className="flex w-[12px] justify-center"><Caret /></span>
        </StatusGroup>
        <StatusGroup className="w-[76px]">
          <IconButton label="Orto" className="w-[17px]">
            <Svg w={12} h={12}><path d="M2.500 1v8.500H12M4 9.500V7h2.500" stroke={blue} strokeWidth="1.500" /></Svg>
          </IconButton>
          <IconButton label="Puntamento polare" className="w-[18px]">
            <Svg w={12} h={12}><circle cx="5.500" cy="6" r="4.500" stroke={pale} strokeWidth="1.200" /><path d="M5.500 6H12" stroke={pale} strokeWidth="1.200" /></Svg>
          </IconButton>
          <span className="flex w-[12px] justify-center"><Caret /></span>
          <IconButton label="Disegno isometrico" className="w-[18px]">
            <Svg w={14} h={14}><path d="M1 2l12 10M6.500 1v12" stroke={pale} strokeWidth="1.200" /></Svg>
          </IconButton>
          <span className="flex w-[10px] justify-center"><Caret /></span>
        </StatusGroup>
        <StatusGroup className="w-[48px]">
          <IconButton label="Puntamento snap" className="w-[20px]">
            <Svg w={12} h={12}><path d="M11.500 1.500L1 10.500h11" stroke={blue} strokeWidth="1.700" /></Svg>
          </IconButton>
          <IconButton label="Snap ad oggetto" className="w-[15px]">
            <Svg w={14} h={12}><rect x="3" y="2.500" width="9" height="8" stroke={blue} strokeWidth="1.500" /><rect x="1" y="0.500" width="4" height="4" fill="#2aa83a" /></Svg>
          </IconButton>
          <span className="flex w-[12px] justify-center"><Caret /></span>
        </StatusGroup>
        <StatusGroup className="w-[20px] justify-center">
          <IconButton label="Spessore linea" className="w-[16px]">
            <Svg w={13} h={12}><path d="M0 1.500h13M0 8h9" stroke={blue} strokeWidth="2" /><path d="M0 5h13M0 11h9" stroke={blue} strokeWidth="1.500" /></Svg>
          </IconButton>
        </StatusGroup>
        <StatusGroup className="w-[79px]">
          <IconButton label="Visibilità annotazione" className="w-[18px]">{person(blue, true)}</IconButton>
          <IconButton label="Scala automatica" className="w-[18px]">{person(pale, true)}</IconButton>
          <IconButton label="Scala annotazione" className="w-[18px]">{person(pale, false)}</IconButton>
          <button type="button" className="flex items-center gap-[2px] pl-px">1:1<Caret /></button>
        </StatusGroup>
        <StatusGroup className="w-[31px] justify-center gap-[5px]">
          <IconButton label="Area di lavoro" className="w-[12px]">
            <Svg w={10} h={10}><circle cx="5" cy="5" r="3" stroke="#dedede" strokeWidth="2.200" /><path d="M5 0v2M5 8v2M0 5h2M8 5h2M1.500 1.500l1.300 1.300M7.200 7.200l1.300 1.300M8.500 1.500L7.200 2.800M2.800 7.200L1.500 8.500" stroke="#dedede" strokeWidth="1.500" /></Svg>
          </IconButton>
          <Caret />
        </StatusGroup>
        <StatusGroup className="w-[18px] justify-center">
          <IconButton label="Monitor annotazioni" className="w-[14px]">
            <Svg w={12} h={12}><path d="M0.500 6h11M6 0.500v11" stroke="#dedede" strokeWidth="1.300" /></Svg>
          </IconButton>
        </StatusGroup>
        <StatusGroup className="w-[19px] justify-center">
          <IconButton label="Isola oggetti" className="w-[14px]">
            <Svg w={12} h={12}><rect x="1" y="1" width="5" height="4.500" stroke={pale} /><circle cx="9.500" cy="4.500" r="2" stroke={pale} /><path d="M4 11l2.500-4L9 11z" stroke={pale} /></Svg>
          </IconButton>
        </StatusGroup>
        <StatusGroup className="w-[20px] justify-center">
          <IconButton label="Prestazioni grafiche" className="w-[14px]">
            <Svg w={13} h={13}><circle cx="6.500" cy="6.500" r="5.800" fill="#1c62c0" stroke="#2f86e8" /><path d="M4 8l4.500-4" stroke="#0f3977" strokeWidth="1.500" /></Svg>
          </IconButton>
        </StatusGroup>
        <StatusGroup className="w-[19px] justify-center">
          <IconButton label="Notifica" className="w-[14px]">
            <Svg w={13} h={13}><rect x="1" y="1" width="7" height="9" fill="#e8e4c4" /><path d="M2 5h8v3H2z" fill="#5b94dc" /><path d="M5 9l2.500 2.500L12 6" stroke="#3fae3a" strokeWidth="2" /><circle cx="7" cy="5" r="1.500" fill="#efc23c" /></Svg>
          </IconButton>
        </StatusGroup>
        <StatusGroup className="w-[19px] justify-center">
          <IconButton label="Schermo intero" className="w-[14px]">
            <Svg w={13} h={12}><rect x="0.500" y="1.500" width="12" height="9" stroke={pale} /><path d="M3 8.500V6l2.500 2.500zM10 3.500V6L7.500 3.500z" fill={pale} stroke={pale} /></Svg>
          </IconButton>
        </StatusGroup>
        <IconButton label="Personalizzazione" className="w-[17px]">
          <Svg w={12} h={12}><path d="M0 2h12M0 6h12M0 10h12" stroke="#dedede" strokeWidth="1.300" /></Svg>
        </IconButton>
      </div>
    </footer>
  );
}

/* ---------- Taskbar ---------- */

const apps: { name: string; on?: boolean; bar?: boolean; icon: React.ReactNode }[] = [
  {
    name: "Visualizzazione attività",
    icon: <Svg w={16} h={14}><rect x="3.500" y="1.500" width="8" height="10" stroke="#c8c8c8" /><path d="M2 3.500H.5v6H2M13 3.500h1.500v6H13" stroke="#c8c8c8" /></Svg>,
  },
  {
    name: "Edge",
    icon: <Svg w={16} h={16}><path d="M.5 8C1 3.500 4 .8 8 .8c4.500 0 7 3 7 7.200v1.500H5.500c.3 2.500 2 3.300 4.500 3.300 1.600 0 3-.4 4-1v3c-1.200.7-2.800 1-4.600 1C5 15.800 2.200 13.200 2.200 9.500c0-2.500 1.500-4.300 3.300-5C3.500 4.800 1.500 6 .5 8zM5.600 6.800h5.200c0-1.800-1-2.800-2.600-2.800S5.800 5 5.600 6.800z" fill="#0c80dc" fillRule="evenodd" /></Svg>,
  },
  {
    name: "Esplora file",
    icon: <Svg w={17} h={14}><path d="M.5 1H6l1.500 1.500h9V13H.5z" fill="#f0c95c" /><path d="M.5 4h16v9H.5z" fill="#fadf86" /><path d="M4 8h9v5.500h-2.500V11h-4v2.500H4z" fill="#35a6dc" /></Svg>,
  },
  {
    name: "Store",
    icon: <Svg w={16} h={18}><path d="M1 6l14-1v12L1 15.500z" fill="#fff" /><path d="M4.500 6C4.500 0 9.500 0 10 5.500" stroke="#fff" strokeWidth="1.200" /><path d="M4 8.500l3.300-.3v2.900H4zM8 8.100l4-.3v3.300H8zM4 11.800h3.300v2.700L4 14.200zM8 11.800h4V15l-4-.4z" fill="#000" /></Svg>,
  },
  {
    name: "Regali",
    icon: <Svg w={18} h={18}><rect width="18" height="18" rx="2" fill="#fff" /><path d="M3 6.500h5.200v2.500H3zM9.800 6.500H15v2.500H9.800zM4 10h4.200v5.500H4zM9.800 10H14v5.500H9.800z" fill="#b5121b" /><path d="M9 6C5 5.500 4.500 2 6.500 2S9 5 9 6c0-1 .5-4 2.500-4S13 5.500 9 6z" stroke="#b5121b" strokeWidth="1.200" /></Svg>,
  },
  {
    name: "Firefox",
    icon: <Svg w={17} h={17}><circle cx="8.500" cy="8.500" r="8" fill="#e66a12" /><circle cx="9.500" cy="7" r="5.500" fill="#2d7fd0" /><path d="M1 5c1 .5 2 1 4.500.5L7 8l3 1c-1 2-4 2.500-6 .5 1 4 6 5 9.500 2 1.500-1.500 2-4 2-4 1 4-2.500 9-7.500 9-5.500 0-8-5.500-7-11.500z" fill="#f0952a" /></Svg>,
  },
  {
    name: "Chrome",
    bar: true,
    icon: <Svg w={16} h={16}><circle cx="8" cy="8" r="7.800" fill="#e8c52c" /><path d="M8 .2A7.800 7.800 0 0 0 1.250 4.100L4.600 10 8 8V4.200h6.750A7.800 7.800 0 0 0 8 .2z" fill="#dc4437" /><path d="M1.250 4.100A7.800 7.800 0 0 0 8 15.800l3.300-5.900L8 8l-3.400 2z" fill="#2f9d58" /><circle cx="8" cy="8" r="3.800" fill="#fff" /><circle cx="8" cy="8" r="3" fill="#4585f0" /></Svg>,
  },
  {
    name: "Posta",
    icon: <Svg w={18} h={14}><path d="M0 4.500L9 0l9 4.500V14H0z" fill="#fff" /><path d="M1 4.800h16L9 7.500l4 3.500z" fill="#000" /></Svg>,
  },
  {
    name: "AutoCAD 2016",
    on: true,
    bar: true,
    icon: <Svg w={18} h={18}><rect width="18" height="18" fill="#dc4a50" /><path d="M0 0h18v7L0 11z" fill="#f6b8b4" opacity="0.600" /><path d="M3.500 15L7.500 3h3L15 15l-4-1.500-1-3-3 2z" fill="#a01018" /></Svg>,
  },
];

const tray: { name: string; icon: React.ReactNode }[] = [
  { name: "Sicurezza", icon: <><path d="M1 2l5-1 5 1v4c0 3-2 5-5 6-3-1-5-3-5-6z" fill="#fff" /><path d="M6 1v11M1 6h10" stroke="#000" /><circle cx="9" cy="9" r="3" fill="#22a04a" /></> },
  { name: "Creative", icon: <><ellipse cx="6" cy="6.500" rx="5.500" ry="4" fill="#9fa4a8" /><ellipse cx="7" cy="7" rx="3" ry="1.700" fill="#3a3d40" /></> },
  { name: "Swirl", icon: <><circle cx="6" cy="6" r="4.800" stroke="#aaa" strokeWidth="1.500" /><path d="M6 3.500a2.500 2.500 0 1 0 2.500 3" stroke="#ccc" strokeWidth="1.300" /></> },
  { name: "Sincronizzazione", icon: <><circle cx="7.500" cy="4.500" r="4" fill="#6f96f0" /><path d="M1 9l5-3 1 4-3 2z" fill="#3558c8" /></> },
  { name: "Lettore", icon: <><circle cx="6" cy="6" r="5" stroke="#e8822c" strokeWidth="1.500" /><path d="M6 1a5 5 0 0 1 5 5" stroke="#3d6bd8" strokeWidth="1.500" /><path d="M4.500 3.500L9 6 4.500 8.500z" fill="#3f9fe8" /></> },
  { name: "Strumenti", icon: <><path d="M1 3l4-2 1 3 4-2 1 4-3 1 2 4-4-2-4 2 1-4z" fill="#c8cacc" /><path d="M3 9l6-6" stroke="#333" /></> },
  { name: "Avast", icon: <><path d="M1 10C2 4 5 2 8 4l3 6-3-1-2-3-3 4z" fill="#ef8a1d" /><circle cx="8.500" cy="3.500" r="2.500" fill="#f5b25a" /><path d="M1 11l3-3" stroke="#3fae3a" strokeWidth="1.500" /></> },
  { name: "Mappa", icon: <><circle cx="6" cy="6" r="5.500" fill="#48a64a" /><path d="M3 3l3 1 1 4-3 2zM8 5l3 1-2 3z" fill="#9bd0f0" /></> },
  { name: "Nvidia", icon: <><rect width="12" height="12" fill="#39432f" /><path d="M2 6c2-3 6-3 8 0-2 3-6 3-8 0z" fill="#76b900" /><circle cx="6" cy="6" r="1.500" fill="#2c3324" /></> },
  { name: "USB", icon: <><rect x="4" y="0.500" width="4" height="3" fill="#bbb" /><rect x="2" y="3.500" width="8" height="8.500" rx="1" fill="#d5d5d5" /><circle cx="6" cy="8" r="1.500" fill="#777" /></> },
  { name: "Grafica Intel", icon: <><rect width="12" height="12" fill="#3a93d4" /><rect x="2" y="2" width="8" height="6" stroke="#d4ecfb" /><path d="M4 10h4" stroke="#d4ecfb" /></> },
  { name: "Bluetooth", icon: <><ellipse cx="6" cy="6" rx="4" ry="6" fill="#0b62c4" /><path d="M3.800 3.800l4.200 4.200L6 10V2l2 2-4.200 4.200" stroke="#fff" strokeWidth="0.900" /></> },
  { name: "OneDrive", icon: <path d="M0 10V8.500C.5 7 2 6.500 2.500 6.500 3 4 6.500 3 8 5.500c2-.5 3 .5 3 2 1 .3 1 2.500 0 2.500z" fill="#f2f2f2" /> },
  { name: "Batteria", icon: <><rect x="0.500" y="3.500" width="10" height="5.500" stroke="#ddd" /><path d="M11.500 5v2.500" stroke="#ddd" /><rect x="1.500" y="4.500" width="2" height="3.500" fill="#ddd" /></> },
  { name: "Rete", icon: <path d="M2 11A9 9 0 0 1 11 2M4.500 11A6.500 6.500 0 0 1 11 4.500M7 11a4 4 0 0 1 4-4M9.500 11a1.500 1.500 0 0 1 1.500-1.500" stroke="#bcbcbc" /> },
  { name: "Volume", icon: <path d="M0.500 4.500h2l3-3v9l-3-3h-2zM7.500 4.500l3.500 3.500M11 4.500L7.500 8" stroke="#ddd" /> },
];

function Taskbar() {
  return (
    <div className="mr-[21px] flex h-[29px] items-stretch border-r border-[#3a3a3a] bg-black text-[#d8d8d8]">
      <IconButton label="Start" className="w-[15px]">
        <span className="mr-auto flex flex-col gap-px">
          <span className="h-[5px] w-[3px] bg-white" />
          <span className="h-[5px] w-[3px] bg-white" />
        </span>
      </IconButton>
      <label className="flex w-[255px] shrink-0 items-center bg-[#333333] pr-[9px] pl-[6px]">
        <span className="h-[16px] w-[16px] shrink-0 rounded-full border-3 border-[#f2f2f2]" />
        <input
          type="search"
          aria-label="Cerca in Windows"
          placeholder="Scrivi qui per eseguire la ricerca"
          className="ml-[7px] min-w-0 flex-1 bg-transparent text-[10px] outline-none placeholder:text-[#a9a9a9]"
        />
        <Svg w={12} h={14}>
          <rect x="4" y="0.500" width="4" height="8" rx="2" stroke="#b4b4b4" />
          <path d="M2 6.500v1.500c0 4 8 4 8 0V6.500M6 11v2.500" stroke="#b4b4b4" />
        </Svg>
      </label>
      {apps.map((app) => (
        <button
          key={app.name}
          type="button"
          aria-label={app.name}
          className={`flex w-[37px] shrink-0 flex-col items-center border-b-2 pt-[2px] ${app.on ? "bg-[#333333]" : ""} ${app.bar ? "border-[#76a9dc]" : "border-transparent"}`}
        >
          <span className="flex flex-1 items-center">{app.icon}</span>
        </button>
      ))}
      <div className="ml-auto flex items-center pr-px">
        {tray.map((t) => (
          <IconButton key={t.name} label={t.name} className="w-[18px]">
            <Svg w={12} h={12}>{t.icon}</Svg>
          </IconButton>
        ))}
      </div>
      <div className="flex w-[58px] shrink-0 flex-col items-center justify-center text-[9px] leading-[13px]">
        <span>14:59</span>
        <span>13/10/2017</span>
      </div>
      <IconButton label="Centro notifiche" className="mr-[9px] w-[28px]">
        <Svg w={14} h={14}><path d="M1.500 1.500h11v8.500H9v2.500L6.500 10h-5z" stroke="#e0e0e0" /></Svg>
      </IconButton>
    </div>
  );
}

/* ---------- Page ---------- */

export default function App() {
  return (
    <div className="flex min-h-screen flex-col overflow-hidden bg-white text-[9px] [font-family:'Open_Sans','Noto_Sans',sans-serif]">
      <div className="mr-[26px] h-[3px] border-b border-[#dcdcdc] bg-[#f4f4f4]" />
      <div className="flex flex-1">
        <main className="flex min-w-0 flex-1 flex-col overflow-hidden">
          <TitleBar />
          <MenuBar />
          <RibbonTabs />
          <Ribbon />
          <FileTabs />
          <div className="relative min-h-[200px] flex-1 overflow-hidden bg-[#212830]">
            <FloorPlan />
            <p className="absolute top-[4px] left-0 text-[7px] leading-[10px] text-[#d4d6d8] [font-family:'Liberation_Sans',sans-serif]">Alto][Wireframe 2D]</p>
            <ViewCube />
            <NavBar />
            <CommandLine />
          </div>
          <StatusBar />
        </main>
        <aside className="flex w-[27px] shrink-0 flex-col">
          <div className="h-[18px] w-[6px] border-b border-[#bdbdbd] bg-[#fafafa]" />
          <div className="h-[46px] w-[6px] border-b border-[#bdbdbd] bg-linear-to-r from-[#d6d6d6] to-white" />
          <div className="h-[47px] w-[6px] bg-linear-to-r from-[#d6d6d6] to-white" />
          <div className="h-[248px] w-[6px] bg-linear-to-r from-[#8f8f8f] to-[#c6c6c6]" />
          <div className="w-[6px] flex-1 bg-linear-to-r from-[#b8b8b8] to-[#f4f4f4]" />
        </aside>
      </div>
      <div className="mr-[26px] h-[4px] bg-[#ececec]" />
      <Taskbar />
    </div>
  );
}
